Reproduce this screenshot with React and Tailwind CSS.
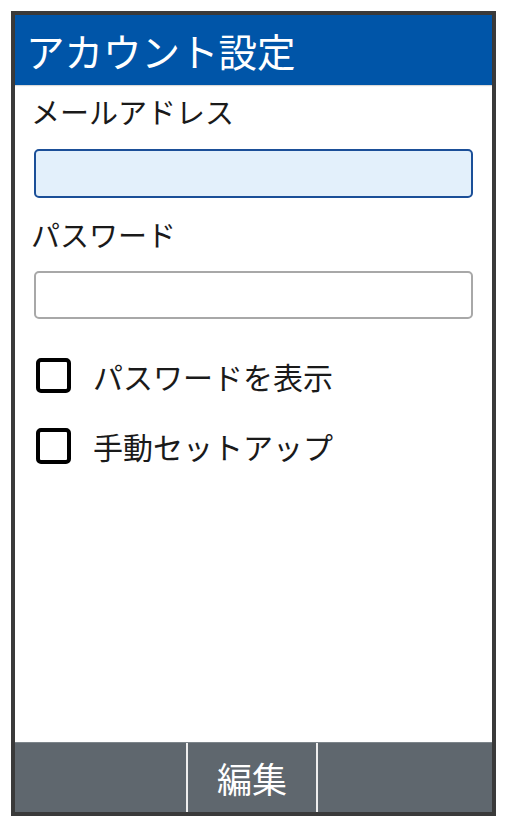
export default function App() {
  const font = { fontFamily: '"Noto Sans CJK JP", "Noto Sans", sans-serif' };

  return (
    <div className="w-[507px] h-[826px] bg-white pt-[11px] pl-[11px]" style={font}>
      <div className="w-[485px] h-[805px] border-4 border-[#3a3a3a] flex flex-col bg-white">
        <div className="h-[70px] bg-[#0055a8] flex items-center pl-[11px] shadow-[0_1px_1px_rgba(0,0,0,0.15)]">
          <span className="text-white text-[38.5px] leading-none">アカウント設定</span>
        </div>

        <div className="flex-1 flex flex-col">
          <div className="h-[52px] flex items-center pl-[16px]">
            <span className="text-[29px] leading-none text-[#1a1a1a]">メールアドレス</span>
          </div>
          <div className="mt-[12px] mx-[19px] h-[49px] rounded-[5px] border-2 border-[#1b4f98] bg-[#e3f0fb]" />

          <div className="h-[73px] flex items-center pl-[16px]">
            <span className="text-[29px] leading-none text-[#1a1a1a]">パスワード</span>
          </div>
          <div className="mx-[19px] h-[48px] rounded-[5px] border-2 border-[#a8a8a8] bg-white" />

          <div className="mt-[39px] h-[35px] flex items-center pl-[21px]">
            <div className="w-[35px] h-[35px] rounded-[5px] border-[4px] border-black" />
            <span className="ml-[22px] text-[30px] leading-none text-[#1a1a1a]">パスワードを表示</span>
          </div>
          <div className="mt-[35px] h-[36px] flex items-center pl-[21px]">
            <div className="w-[35px] h-[36px] rounded-[5px] border-[4px] border-black" />
            <span className="ml-[22px] text-[30px] leading-none text-[#1a1a1a]">手動セットアップ</span>
          </div>
        </div>

        <div className="h-[70px] bg-[#5f676e] border-t border-[#7d858b] flex">
          <div className="w-[173px] border-r-2 border-[#eeeeee]" />
          <div className="w-[130px] border-r-2 border-[#eeeeee] flex items-center justify-center">
            <span className="text-white text-[35px] leading-none">編集</span>
          </div>
          <div className="flex-1" />
        </div>
      </div>
    </div>
  );
}
